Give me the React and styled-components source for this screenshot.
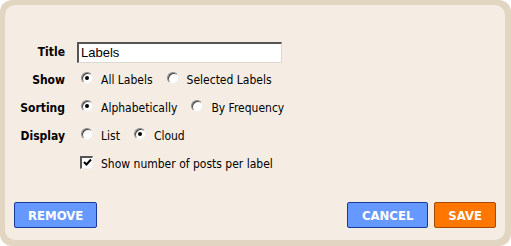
import React from 'react'
import styled, { createGlobalStyle } from 'styled-components'

const GlobalStyle = createGlobalStyle`
  html, body {
    margin: 0;
    padding: 0;
    background: #ffffff;
  }
`

const App = () => {
  return (
    <>
      <GlobalStyle />
      <Frame>
        <Panel>
          <Form>
            <Label>Title</Label>
            <Field>
              <TextInput defaultValue='Labels' />
            </Field>

            <Label>Show</Label>
            <Field>
              <Choice>
                <Radio checked />
                All Labels
              </Choice>
              <Choice>
                <Radio />
                Selected Labels
              </Choice>
            </Field>

            <Label>Sorting</Label>
            <Field>
              <Choice>
                <Radio checked />
                Alphabetically
              </Choice>
              <Choice>
                <Radio />
                By Frequency
              </Choice>
            </Field>

            <Label>Display</Label>
            <Field>
              <Choice>
                <Radio />
                List
              </Choice>
              <Choice>
                <Radio checked />
                Cloud
              </Choice>
            </Field>

            <span />
            <Field>
              <Choice>
                <Checkbox checked />
                Show number of posts per label
              </Choice>
            </Field>
          </Form>

          <Footer>
            <Button>REMOVE</Button>
            <Spacer />
            <Button $wide>CANCEL</Button>
            <Button $primary>SAVE</Button>
          </Footer>
        </Panel>
      </Frame>
    </>
  )
}

const Radio = ({ checked }) => (
  <RadioBox>{checked && <RadioDot />}</RadioBox>
)

const Checkbox = ({ checked }) => (
  <CheckBox>
    {checked && (
      <svg width='9' height='9' viewBox='0 0 9 9'>
        <path d='M1 4 L3.5 6.5 L8 1.5' stroke='#000' strokeWidth='2' fill='none' />
      </svg>
    )}
  </CheckBox>
)

const Frame = styled.div`
  width: 511px;
  height: 246px;
  box-sizing: border-box;
  padding: 5px 6px 6px 5px;
  background: #e2d6c2;
  border-radius: 12px;
  font-family: 'DejaVu Sans Condensed', 'DejaVu Sans', sans-serif;
`

const Panel = styled.div`
  height: 100%;
  box-sizing: border-box;
  background: #f5ece4;
  border-radius: 10px;
  padding: 33px 0 0 9px;
  display: flex;
  flex-direction: column;
`

const Form = styled.div`
  display: grid;
  grid-template-columns: 51px 1fr;
  column-gap: 12px;
  grid-auto-rows: 28px;
  align-items: center;
  font-size: 12px;
  color: #000;
`

const Label = styled.div`
  text-align: right;
  font-weight: bold;
`

const Field = styled.div`
  display: flex;
  align-items: center;
  gap: 14px;
  padding-left: 4px;
`

const TextInput = styled.input`
  width: 205px;
  height: 21px;
  box-sizing: border-box;
  margin-left: -4px;
  padding: 0 2px;
  font-family: 'Liberation Sans', Arial, sans-serif;
  font-size: 13px;
  color: #000;
  background: #fff;
  border-style: solid;
  border-width: 2px 1px 1px 2px;
  border-color: #555 #dcd8d0 #dcd8d0 #555;
  outline: none;
`

const Choice = styled.label`
  display: flex;
  align-items: center;
  gap: 8px;
  white-space: nowrap;
`

const RadioBox = styled.span`
  width: 10px;
  height: 10px;
  border-radius: 50%;
  background: #fff;
  border: 1px solid #8a8a8a;
  border-bottom-color: #f0f0f0;
  border-right-color: #f0f0f0;
  box-shadow: inset 1px 1px 0 #404040;
  display: flex;
  align-items: center;
  justify-content: center;
  margin-top: -4px;
`

const RadioDot = styled.span`
  width: 4px;
  height: 4px;
  border-radius: 50%;
  background: #000;
`

const CheckBox = styled.span`
  width: 13px;
  height: 13px;
  box-sizing: border-box;
  background: #fff;
  border-style: solid;
  border-width: 2px 1px 1px 2px;
  border-color: #555 #f0f0f0 #f0f0f0 #555;
  display: flex;
  align-items: center;
  justify-content: center;
  margin-top: -4px;
  margin-left: -1px;
`

const Footer = styled.div`
  margin-top: auto;
  margin-bottom: 12px;
  display: flex;
  align-items: center;
  gap: 6px;
  padding-right: 9px;
`

const Spacer = styled.div`
  flex: 1;
`

const Button = styled.button`
  height: 26px;
  box-sizing: border-box;
  padding: 0 ${(props) => (props.$wide ? '14px' : '13px')};
  font-family: 'DejaVu Sans Condensed', 'DejaVu Sans', sans-serif;
  font-size: 13px;
  font-weight: bold;
  color: #fff;
  background: ${(props) => (props.$primary ? '#ff7600' : '#6699ff')};
  border: 1px solid ${(props) => (props.$primary ? '#a94a00' : '#1a3a99')};
  border-radius: 2px;
  cursor: pointer;
`

export default App
